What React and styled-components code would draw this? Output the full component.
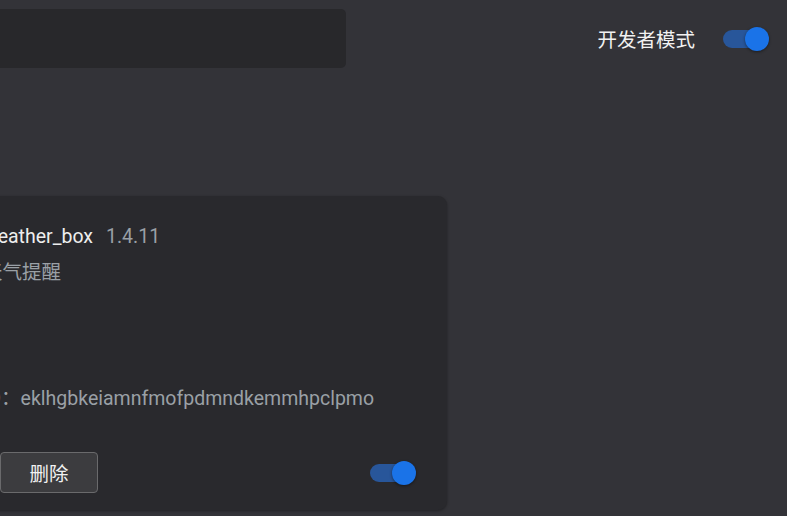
import React, { useState } from "react"
import styled, { createGlobalStyle } from "styled-components"

const GlobalStyle = createGlobalStyle`
  html, body {
    margin: 0;
    padding: 0;
    background: #333338;
    overflow: hidden;
  }
  body {
    font-family: Roboto, "Noto Sans CJK SC", sans-serif;
    color: #e8eaed;
  }
`

const Page = styled.div`
  width: 787px;
  height: 516px;
`

const Toolbar = styled.div`
  display: flex;
  align-items: flex-start;
  justify-content: space-between;
  padding: 9px 24px 0 0;
`

const Search = styled.div`
  margin-left: -200px;
  width: 546px;
  height: 59px;
  background: #28282b;
  border-radius: 5px;
`

const DevMode = styled.div`
  display: flex;
  align-items: center;
  gap: 28px;
  height: 59px;
  font-size: 19.5px;
  color: #f1f1f1;
`

const Track = styled.button`
  position: relative;
  width: 40px;
  height: 18px;
  padding: 0;
  border: none;
  border-radius: 9px;
  background: ${p => (p.$on ? "#28569a" : "#5f6368")};
  cursor: pointer;
`

const Knob = styled.span`
  position: absolute;
  top: -3px;
  left: ${p => (p.$on ? "22px" : "-2px")};
  width: 24px;
  height: 24px;
  border-radius: 50%;
  background: ${p => (p.$on ? "#1a73e8" : "#bdc1c6")};
  box-shadow: 0 1px 3px rgba(0, 0, 0, 0.45);
`

const Toggle = ({ initial = true }) => {
  const [on, setOn] = useState(initial)
  return (
    <Track $on={on} onClick={() => setOn(!on)}>
      <Knob $on={on} />
    </Track>
  )
}

const Card = styled.div`
  margin: 128px 0 0 -153px;
  width: 600px;
  height: 314px;
  box-sizing: border-box;
  background: #29292d;
  border-radius: 9px;
  box-shadow: 0 1px 3px rgba(0, 0, 0, 0.35);
  display: flex;
  flex-direction: column;
`

const Body = styled.div`
  padding: 27px 0 0 136px;
  flex: 1;
`

const TitleRow = styled.div`
  display: flex;
  align-items: baseline;
  gap: 13px;
  line-height: 28px;
`

const Name = styled.span`
  font-size: 19.5px;
  color: #eeeeee;
`

const Muted = styled.div`
  font-size: 19.5px;
  line-height: 28px;
  color: #9aa0a6;
  margin-top: ${p => p.$top || "0"};
`

const Actions = styled.div`
  display: flex;
  align-items: center;
  gap: 12px;
  padding: 0 37px 17px 21px;
`

const Button = styled.button`
  width: ${p => p.$w || "98px"};
  height: 41px;
  box-sizing: border-box;
  background: #3c3c3f;
  border: 1px solid #6a6a6c;
  border-radius: 4px;
  color: #f1f1f1;
  font-family: Roboto, "Noto Sans CJK SC", sans-serif;
  font-size: 19.5px;
  padding: 0;
  cursor: pointer;
`

const Spacer = styled.div`
  flex: 1;
`

export default function App() {
  return (
    <>
      <GlobalStyle />
      <Page>
        <Toolbar>
          <Search />
          <DevMode>
            <span>开发者模式</span>
            <Toggle />
          </DevMode>
        </Toolbar>
        <Card>
          <Body>
            <TitleRow>
              <Name>weather_box</Name>
              <Muted as="span">1.4.11</Muted>
            </TitleRow>
            <Muted $top="8px">天气提醒</Muted>
            <Muted $top="98px">ID：eklhgbkeiamnfmofpdmndkemmhpclpmo</Muted>
          </Body>
          <Actions>
            <Button $w="120px">详细信息</Button>
            <Button>删除</Button>
            <Spacer />
            <Toggle />
          </Actions>
        </Card>
      </Page>
    </>
  )
}
